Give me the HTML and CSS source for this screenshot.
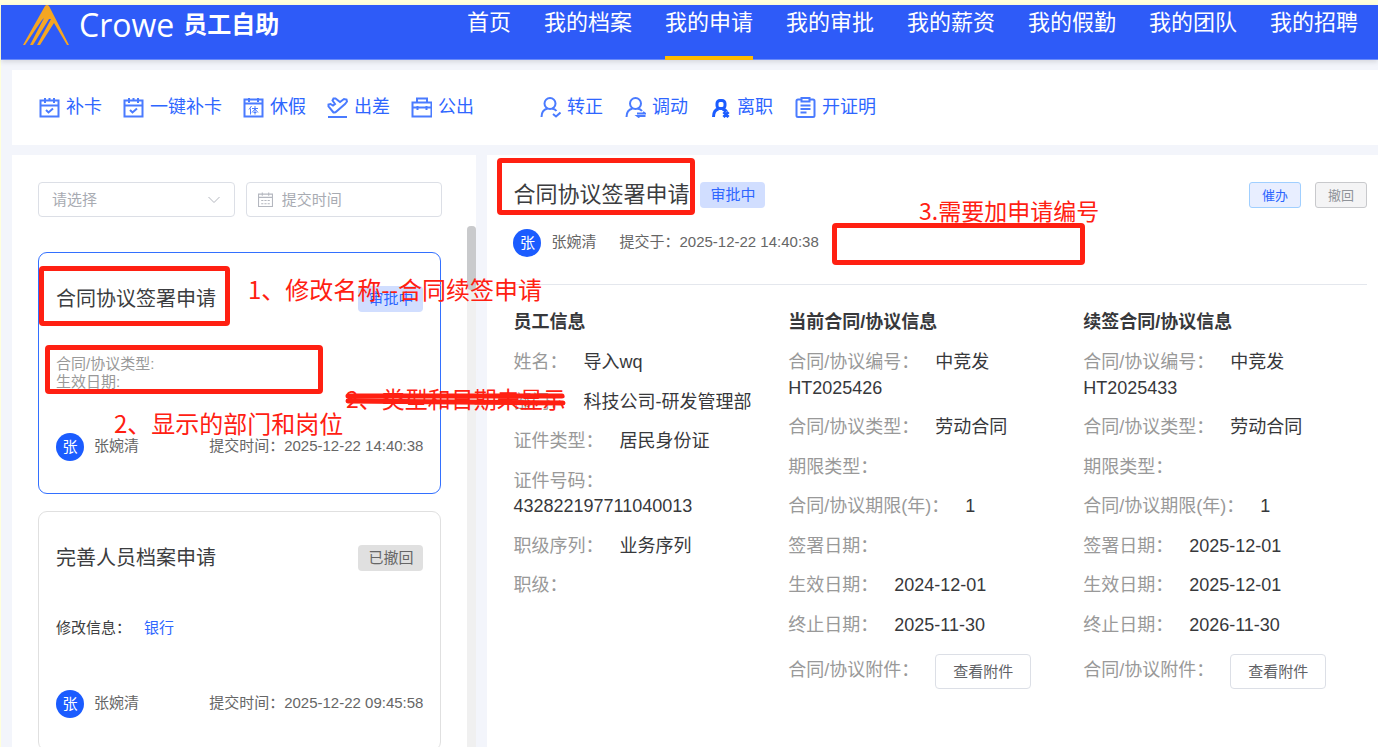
FILE: index.html
```html
<!DOCTYPE html>
<html lang="zh-CN">
<head>
<meta charset="utf-8">
<title>员工自助</title>
<link rel="stylesheet" href="styles.css">
</head>
<body>
<div class="page">
  <header class="header">
    <div class="brand">
      <svg class="brand-mark" viewBox="0 0 46 40" aria-hidden="true"><path d="M22 1Q24-1 26 1L46 40H44L31 18 17 40H14L28 14 26 14 10 40H7L21 13 19 15 2 40H0Z" fill="#f5a623"/></svg>
      <span class="brand-name">Crowe</span>
      <span class="brand-title">员工自助</span>
    </div>
    <nav class="nav">
      <a href="#">首页</a>
      <a href="#">我的档案</a>
      <a href="#" class="active">我的申请</a>
      <a href="#">我的审批</a>
      <a href="#">我的薪资</a>
      <a href="#">我的假勤</a>
      <a href="#">我的团队</a>
      <a href="#">我的招聘</a>
    </nav>
  </header>

  <main class="main">
    <section class="toolbar">
      <div class="tools">
        <a href="#" class="tool"><svg viewBox="0 0 21 21"><path d="M1.500 3.500h18v16h-18zM1.500 8.500h18M6 1v5M10.500 1v3M15 1v5M7 13l2.500 2.500 4.500-4"/></svg>补卡</a>
        <a href="#" class="tool"><svg viewBox="0 0 21 21"><path d="M1.500 3.500h18v16h-18zM1.500 8.500h18M6 1v5M10.500 1v3M15 1v5M7 13l2.500 2.500 4.500-4"/></svg>一键补卡</a>
        <a href="#" class="tool"><svg viewBox="0 0 21 21"><path d="M1.500 2.500h18v17h-18zM1.500 6.500h18M6 1v4M15 1v4"/><path class="thin" d="M8.500 9l-2.500 3.500M7.500 11.500V17.500M9 11.500h6M12 9v8.500M12 12l-3 3.500M12 12l3 3.500M10.500 15.500h3"/></svg>休假</a>
        <a href="#" class="tool"><svg viewBox="0 0 21 21"><path d="M1 20h19M6.500 15.500L1.500 9.500 1.500 7.500 3.500 7 6 8.500 8 7 5.500 3.500 6.500 1.500 8.500 1.500 13 5 17 2 19.500 2.500 20 4.500 18 7 10 14Q8 16 6.500 15.500Z"/></svg>出差</a>
        <a href="#" class="tool"><svg viewBox="0 0 21 21"><path d="M1.500 5.500h19v14h-19zM6 5V1.500h10V5M1.500 10.500h19M6.500 9v4M15.500 9v4"/></svg>公出</a>
      </div>
      <div class="tools tools-wide">
        <a href="#" class="tool"><svg viewBox="0 0 21 21"><circle cx="10" cy="6.500" r="5.500"/><path d="M1.500 20q0-7 6-8.500M12 11.500q3 .5 4.500 2.500M13 17l3 2.500 4.500-4"/></svg>转正</a>
        <a href="#" class="tool"><svg viewBox="0 0 21 21"><circle cx="10.500" cy="6.500" r="5.500"/><path d="M1.500 20q0-7 6-8.500M12.500 11.500q3 .5 4.500 2.500M12 16.500h8l-2-1.500M20.500 19h-8l2 1.500"/></svg>调动</a>
        <a href="#" class="tool"><svg class="heavy" viewBox="0 0 21 21"><rect x="7" y="3.500" width="8" height="8" rx="3"/><path d="M3.500 20q0-7 5-8M12.500 12q3 1 4 2.500M13.500 15l5 5M18.500 15l-5 5"/></svg>离职</a>
        <a href="#" class="tool"><svg viewBox="0 0 21 21"><path d="M6 2.500H3a1.500 1.500 0 0 0-1.500 1.500v14.500a1.500 1.500 0 0 0 1.500 1.500h15a1.500 1.500 0 0 0 1.500-1.500V4A1.500 1.500 0 0 0 18 2.500h-3M6.500 1h8v3.500h-8zM5.500 8.500h10M5.500 12h10M5.500 15.500h6"/></svg>开证明</a>
      </div>
    </section>

    <div class="columns">
      <section class="list-panel">
        <form class="filters">
          <div class="field">
            <select class="control" aria-label="申请类型"><option>请选择</option></select>
            <svg class="chevron" viewBox="0 0 14 8" aria-hidden="true"><path d="M1.500 1 7 6.500 12.500 1"/></svg>
          </div>
          <div class="field">
            <input class="control control-date" type="text" placeholder="提交时间" aria-label="提交时间">
            <svg class="calendar" viewBox="0 0 14 14" aria-hidden="true"><path d="M.5 2h13v11.500H.5zM.5 5h13M4 .5v3M10 .5v3M3 8h2M6 8h2M9 8h2M3 11h2M6 11h2M9 11h2"/></svg>
          </div>
        </form>
        <div class="list">
          <div class="cards">
            <article class="card selected">
              <div class="card-head"><h2>合同协议签署申请</h2><span class="tag">审批中</span></div>
              <div class="card-desc">合同/协议类型:<br>生效日期:</div>
              <div class="card-foot"><span class="avatar">张</span><span>张婉清</span><span class="time">提交时间：2025-12-22 14:40:38</span></div>
            </article>
            <article class="card">
              <div class="card-head"><h2>完善人员档案申请</h2><span class="tag tag-gray">已撤回</span></div>
              <div class="card-change">修改信息：<a href="#">银行</a></div>
              <div class="card-foot"><span class="avatar">张</span><span>张婉清</span><span class="time">提交时间：2025-12-22 09:45:58</span></div>
            </article>
          </div>
          <div class="track"><div class="thumb"></div></div>
        </div>
      </section>

      <section class="detail">
        <div class="detail-head">
          <h1>合同协议签署申请</h1>
          <span class="tag">审批中</span>
          <div class="actions">
            <button type="button" class="btn btn-primary">催办</button>
            <button type="button" class="btn btn-muted">撤回</button>
          </div>
        </div>
        <div class="meta"><span class="avatar">张</span><span>张婉清</span><span class="submitted">提交于：2025-12-22 14:40:38</span></div>
        <div class="info">
          <div class="info-col">
            <h3>员工信息</h3>
            <p><span class="label">姓名：</span>导入wq</p>
            <p><span class="label">部门：</span>科技公司-研发管理部</p>
            <p><span class="label">证件类型：</span>居民身份证</p>
            <p><span class="label">证件号码：</span> 432822197711040013</p>
            <p><span class="label">职级序列：</span>业务序列</p>
            <p><span class="label">职级：</span></p>
          </div>
          <div class="info-col">
            <h3>当前合同/协议信息</h3>
            <p><span class="label">合同/协议编号：</span>中竞发 HT2025426</p>
            <p><span class="label">合同/协议类型：</span>劳动合同</p>
            <p><span class="label">期限类型：</span></p>
            <p><span class="label">合同/协议期限(年)：</span>1</p>
            <p><span class="label">签署日期：</span></p>
            <p><span class="label">生效日期：</span>2024-12-01</p>
            <p><span class="label">终止日期：</span>2025-11-30</p>
            <p><span class="label">合同/协议附件：</span><button type="button" class="attach">查看附件</button></p>
          </div>
          <div class="info-col">
            <h3>续签合同/协议信息</h3>
            <p><span class="label">合同/协议编号：</span>中竞发 HT2025433</p>
            <p><span class="label">合同/协议类型：</span>劳动合同</p>
            <p><span class="label">期限类型：</span></p>
            <p><span class="label">合同/协议期限(年)：</span>1</p>
            <p><span class="label">签署日期：</span>2025-12-01</p>
            <p><span class="label">生效日期：</span>2025-12-01</p>
            <p><span class="label">终止日期：</span>2026-11-30</p>
            <p><span class="label">合同/协议附件：</span><button type="button" class="attach">查看附件</button></p>
          </div>
        </div>
      </section>
    </div>
  </main>

  <div class="notes">
    <div class="mark mark-card-title"></div>
    <div class="mark mark-card-desc"></div>
    <div class="mark mark-title"></div>
    <div class="mark mark-number"></div>
    <span class="note note-rename">1、修改名称--合同续签申请</span>
    <span class="note note-dept">2、显示的部门和岗位</span>
    <span class="note note-old">2、类型和日期未显示</span>
    <span class="note note-number">3.需要加申请编号</span>
    <svg class="strike" viewBox="0 0 224 16" aria-hidden="true"><path d="M4 5 218 5M4 10 219 12"/></svg>
  </div>
</div>
</body>
</html>
```

FILE: styles.css
```css
* { box-sizing: border-box; }

body {
  margin: 0;
  font-family: "Liberation Sans", "Noto Sans CJK SC", sans-serif;
  font-size: 15px;
  color: #37383b;
  background: #ffffdc;
}

h1, h2, h3, p { margin: 0; font-weight: 400; }
a { text-decoration: none; }
button, input, select { font: inherit; }

.page {
  position: relative;
  display: flex;
  flex-direction: column;
  height: 100vh;
  padding: 5px 0 0 1px;
  overflow: hidden;
}

.header {
  position: relative;
  z-index: 1;
  flex: none;
  display: flex;
  justify-content: space-between;
  height: 55px;
  padding: 0 20px 0 22px;
  background: #2e5bf8;
  border-bottom: 1px solid #6a8bfa;
  box-shadow: 0 2px 5px rgba(0, 0, 0, 0.12);
  color: #fff;
}

.brand { display: flex; align-items: center; height: 40px; line-height: 40px; }
.brand-mark { width: 46px; height: 40px; margin-right: 10px; }
.brand-name { font-family: "Open Sans", sans-serif; font-size: 32px; margin-right: 9px; }
.brand-title { font-size: 24px; font-weight: 700; }

.nav { display: flex; gap: 33px; }
.nav a { height: 55px; color: #fff; font-size: 22px; line-height: 36px; white-space: nowrap; }
.nav .active { border-bottom: 4px solid #ffba00; }

.main {
  flex: 1;
  min-height: 0;
  display: flex;
  flex-direction: column;
  gap: 10px;
  padding: 10px 0 0 11px;
  background: #f3f5fb;
}

.toolbar {
  flex: none;
  display: flex;
  align-items: center;
  gap: 66px;
  height: 75px;
  padding-left: 27px;
  background: #fff;
}
.tools { display: flex; gap: 21px; }
.tools-wide { gap: 22px; }
.tool { display: flex; align-items: flex-start; gap: 6px; font-size: 18px; line-height: 21px; color: #2e66ff; white-space: nowrap; }
.tool svg { width: 21px; height: 21px; fill: none; stroke: #4a7bff; stroke-width: 2; }
.tool .thin { stroke-width: 1; }
.tool .heavy { stroke: #1b5cff; stroke-width: 3; }

.columns { flex: 1; min-height: 0; display: flex; gap: 11px; }

.list-panel {
  flex: 0 0 34%;
  display: flex;
  flex-direction: column;
  padding: 27px 0 0 26px;
  background: #fff;
}
.filters { display: flex; gap: 11px; padding-right: 34px; }
.field { position: relative; flex: 1; }
.control {
  width: 100%;
  height: 35px;
  padding: 0 13px;
  border: 1px solid #dcdfe6;
  border-radius: 4px;
  background: #fff;
  color: #a8abb2;
  appearance: none;
}
.control::placeholder { color: #a8abb2; opacity: 1; }
.control-date { padding-left: 35px; }
.chevron, .calendar { position: absolute; fill: none; stroke: #b4b7bf; stroke-width: 1; }
.chevron { right: 14px; top: 14px; width: 14px; height: 8px; }
.calendar { left: 12px; top: 10px; width: 15px; height: 15px; }

.list { flex: 1; min-height: 0; display: flex; margin-top: 9px; overflow: hidden; }
.cards { flex: 1; padding: 26px 26px 0 0; }
.track { width: 9px; background: #f0f0f0; border-radius: 4px 4px 0 0; }
.thumb { height: 64px; border-radius: 4px; background: #c9cacc; }

.card {
  margin-bottom: 17px;
  padding: 32px 17px;
  border: 1px solid #e0e0e0;
  border-radius: 9px;
  color: #666;
}
.card.selected { border-color: #3370ff; }
.card-head { display: flex; align-items: center; justify-content: space-between; height: 28px; }
.card-head h2 { font-size: 20px; line-height: 26px; color: #3c3d40; }
.card-desc { margin: 42px 0; line-height: 18px; color: #999; }
.card-change { margin: 42px 0; padding-bottom: 6px; line-height: 28px; color: #3c3d40; }
.card-change a { margin-left: 13px; color: #2e66ff; }
.card-foot { display: flex; align-items: flex-start; gap: 10px; line-height: 26px; }
.time { margin-left: auto; }

.tag {
  padding: 0 10px;
  border-radius: 4px;
  background: #d1deff;
  color: #2e66ff;
  line-height: 26px;
}
.tag-gray { background: #e0e0e0; color: #666; }

.avatar {
  width: 28px;
  height: 28px;
  border-radius: 50%;
  background: #1b5cff;
  color: #fff;
  line-height: 28px;
  text-align: center;
}

.detail { flex: 1; min-width: 0; padding: 27px 11px 0 26px; background: #fff; }
.detail-head { display: flex; align-items: flex-start; gap: 11px; height: 29px; }
.detail-head h1 { font-size: 22px; line-height: 25px; color: #3c3d40; }
.actions { display: flex; gap: 14px; margin-left: auto; }
.btn { width: 52px; height: 26px; padding: 0 0 2px; border: 1px solid; border-radius: 3px; font-size: 13px; }
.btn-primary { border-color: #a0cfff; background: #e8eeff; color: #2e66ff; }
.btn-muted { border-color: #c8c9cc; background: #f4f4f5; color: #909399; }

.meta {
  display: flex;
  align-items: flex-start;
  gap: 10px;
  padding: 18px 0 27px;
  border-bottom: 1px solid #e4e7ed;
  color: #666;
  line-height: 26px;
}
.submitted { margin-left: 13px; }

.info { display: grid; grid-template-columns: 275fr 295fr 284fr; padding-top: 24px; font-size: 18px; line-height: 1.42; }
.info-col { display: flex; flex-direction: column; gap: 14px; }
.info-col h3 { font-size: 18px; font-weight: 700; line-height: 26px; padding-bottom: 1px; }
.label { margin-right: 16px; color: #999; }
.attach {
  height: 35px;
  margin-top: 2px;
  padding: 0 17px;
  border: 1px solid #dcdfe6;
  border-radius: 4px;
  background: #fff;
  color: #606266;
  font-size: 15px;
  vertical-align: middle;
}

/* Review marks drawn over the page */
.notes { position: absolute; inset: 0; z-index: 2; pointer-events: none; color: #ff2012; }
.mark { position: absolute; border: 5px solid #ff2012; border-radius: 4px; }
.mark-card-title { left: 39px; top: 266px; width: 191px; height: 60px; }
.mark-card-desc { left: 45px; top: 345px; width: 278px; height: 49px; }
.mark-title { left: 497px; top: 158px; width: 198px; height: 57px; }
.mark-number { left: 832px; top: 223px; width: 253px; height: 42px; }
.note { position: absolute; font-family: "Noto Sans CJK SC", sans-serif; font-size: 23px; line-height: 30px; white-space: nowrap; }
.note-rename { left: 248px; top: 274px; font-size: 24px; }
.note-dept { left: 114px; top: 408px; font-size: 24px; }
.note-old { left: 346px; top: 383px; }
.note-number { left: 919px; top: 195px; }
.strike { position: absolute; left: 344px; top: 391px; width: 224px; height: 16px; fill: none; stroke: #ff2012; stroke-width: 5; stroke-linecap: round; }
```
